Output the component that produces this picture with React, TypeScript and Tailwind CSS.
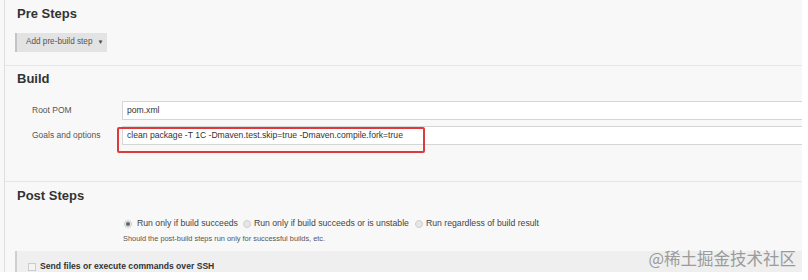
import React from "react";

const font = { fontFamily: '"Liberation Sans", Arial, sans-serif' };

function Radio({ checked }: { checked?: boolean }) {
  return (
    <span className="flex h-[8px] w-[8px] items-center justify-center rounded-full border border-[#cfcfcf] bg-[#e6e6e6]">
      {checked ? <span className="h-[4px] w-[4px] rounded-full bg-[#666]" /> : null}
    </span>
  );
}

function Field({ label, value }: { label: string; value: string }) {
  return (
    <div className="flex h-[19px] items-center">
      <div className="w-[117px] shrink-0 whitespace-nowrap pl-[27px] text-[8.5px] text-[#555]">{label}</div>
      <div className="flex h-[19px] flex-1 items-center whitespace-nowrap border border-r-0 border-[#d6d6d6] bg-white pl-[4px] text-[8.6px] text-[#333]">
        {value}
      </div>
    </div>
  );
}

export default function App() {
  return (
    <div className="relative h-[280px] w-[808px] overflow-hidden bg-white" style={font}>
      <div className="flex h-[272px] w-[802px] bg-[#f8f8f8]">
        <div className="w-[4px] shrink-0" />
        <div className="flex flex-1 flex-col border-l border-[#dedede]">
          {/* Pre Steps */}
          <section className="h-[66px] border-b border-[#e6e6e6] pl-[12px] pt-[6px]">
            <h2 className="text-[13px] font-bold leading-[16px] text-[#333]">Pre Steps</h2>
            <div className="mt-[11px] flex h-[19px]">
              <div className="ml-[-2px] w-[2px] bg-[#c4c4c4]" />
              <button className="flex h-[19px] w-[90px] items-center bg-[#e3e3e3] pl-[9px] text-[8.2px] text-[#555]">
                Add pre-build step
                <span className="ml-[5px] text-[6px] text-[#444]">▼</span>
              </button>
            </div>
          </section>

          {/* Build */}
          <section className="relative h-[117px] border-b border-[#e6e6e6] pt-[5px]">
            <h2 className="pl-[12px] text-[13px] font-bold leading-[16px] text-[#333]">Build</h2>
            <div className="mt-[14px] flex flex-col gap-[6px]">
              <Field label="Root POM" value="pom.xml" />
              <Field label="Goals and options" value="clean package -T 1C -Dmaven.test.skip=true -Dmaven.compile.fork=true" />
            </div>
            <div className="absolute left-[112px] top-[61px] h-[26px] w-[308px] rounded-[2px] border-2 border-[#e0393b]" />
          </section>

          {/* Post Steps */}
          <section className="flex flex-1 flex-col pt-[6px]">
            <h2 className="pl-[12px] text-[13px] font-bold leading-[16px] text-[#333]">Post Steps</h2>
            <div className="mt-[14px] flex h-[12px] items-center whitespace-nowrap pl-[119px] text-[8.7px] text-[#444]">
              <Radio checked />
              <span className="ml-[5px]">Run only if build succeeds</span>
              <span className="ml-[5px]">
                <Radio />
              </span>
              <span className="ml-[3px]">Run only if build succeeds or is unstable</span>
              <span className="ml-[6px]">
                <Radio />
              </span>
              <span className="ml-[3px]">Run regardless of build result</span>
            </div>
            <div className="mt-[4px] whitespace-nowrap pl-[118px] text-[7.4px] leading-[10px] text-[#555]">
              Should the post-build steps run only for successful builds, etc.
            </div>
            <div className="ml-[10px] mt-[7px] flex flex-1 items-start border-l-2 border-[#cfcfcf] bg-[#efefef] pl-[11px] pt-[10px]">
              <span className="mt-[2px] h-[8px] w-[8px] shrink-0 border border-[#ccc] bg-[#f4f4f4]" />
              <span className="ml-[4px] whitespace-nowrap text-[8.6px] font-bold leading-[11px] text-[#333]">
                Send files or execute commands over SSH
              </span>
            </div>
          </section>
        </div>
      </div>
      <div
        className="absolute right-[12px] top-[248px] text-[16.5px] leading-[20px] text-[#9b9b9b]"
        style={{ fontFamily: '"Noto Sans CJK SC", sans-serif' }}
      >
        @稀土掘金技术社区
      </div>
    </div>
  );
}
